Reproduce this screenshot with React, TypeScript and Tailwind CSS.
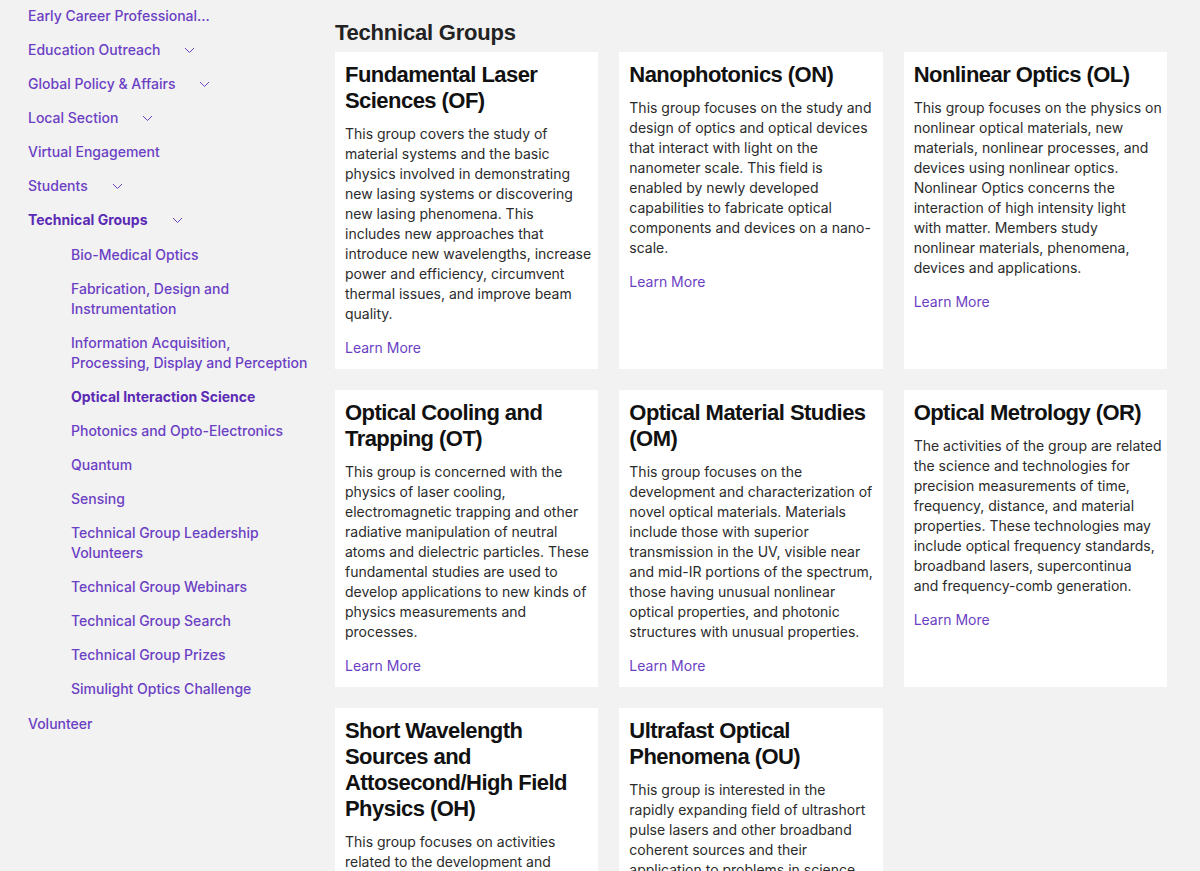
import React from "react";

type NavItem = { label: string[]; chevron?: boolean; active?: boolean };

const topItems: NavItem[] = [
  { label: ["Early Career Professional…"] },
  { label: ["Education Outreach"], chevron: true },
  { label: ["Global Policy & Affairs"], chevron: true },
  { label: ["Local Section"], chevron: true },
  { label: ["Virtual Engagement"] },
  { label: ["Students"], chevron: true },
];

const subItems: NavItem[] = [
  { label: ["Bio-Medical Optics"] },
  { label: ["Fabrication, Design and", "Instrumentation"] },
  { label: ["Information Acquisition,", "Processing, Display and Perception"] },
  { label: ["Optical Interaction Science"], active: true },
  { label: ["Photonics and Opto-Electronics"] },
  { label: ["Quantum"] },
  { label: ["Sensing"] },
  { label: ["Technical Group Leadership", "Volunteers"] },
  { label: ["Technical Group Webinars"] },
  { label: ["Technical Group Search"] },
  { label: ["Technical Group Prizes"] },
  { label: ["Simulight Optics Challenge"] },
];

// lines kept as in the original layout so the wrapping matches
const groups = [
  {
    title: ["Fundamental Laser", "Sciences (OF)"],
    text: [
      "This group covers the study of",
      "material systems and the basic",
      "physics involved in demonstrating",
      "new lasing systems or discovering",
      "new lasing phenomena. This",
      "includes new approaches that",
      "introduce new wavelengths, increase",
      "power and efficiency, circumvent",
      "thermal issues, and improve beam",
      "quality.",
    ],
  },
  {
    title: ["Nanophotonics (ON)"],
    text: [
      "This group focuses on the study and",
      "design of optics and optical devices",
      "that interact with light on the",
      "nanometer scale. This field is",
      "enabled by newly developed",
      "capabilities to fabricate optical",
      "components and devices on a nano-",
      "scale.",
    ],
  },
  {
    title: ["Nonlinear Optics (OL)"],
    text: [
      "This group focuses on the physics on",
      "nonlinear optical materials, new",
      "materials, nonlinear processes, and",
      "devices using nonlinear optics.",
      "Nonlinear Optics concerns the",
      "interaction of high intensity light",
      "with matter. Members study",
      "nonlinear materials, phenomena,",
      "devices and applications.",
    ],
  },
  {
    title: ["Optical Cooling and", "Trapping (OT)"],
    text: [
      "This group is concerned with the",
      "physics of laser cooling,",
      "electromagnetic trapping and other",
      "radiative manipulation of neutral",
      "atoms and dielectric particles. These",
      "fundamental studies are used to",
      "develop applications to new kinds of",
      "physics measurements and",
      "processes.",
    ],
  },
  {
    title: ["Optical Material Studies", "(OM)"],
    text: [
      "This group focuses on the",
      "development and characterization of",
      "novel optical materials. Materials",
      "include those with superior",
      "transmission in the UV, visible near",
      "and mid-IR portions of the spectrum,",
      "those having unusual nonlinear",
      "optical properties, and photonic",
      "structures with unusual properties.",
    ],
  },
  {
    title: ["Optical Metrology (OR)"],
    text: [
      "The activities of the group are related",
      "the science and technologies for",
      "precision measurements of time,",
      "frequency, distance, and material",
      "properties. These technologies may",
      "include optical frequency standards,",
      "broadband lasers, supercontinua",
      "and frequency-comb generation.",
    ],
  },
  {
    title: ["Short Wavelength", "Sources and", "Attosecond/High Field", "Physics (OH)"],
    text: [
      "This group focuses on activities",
      "related to the development and",
      "application of short wavelength",
      "sources and attosecond science.",
    ],
  },
  {
    title: ["Ultrafast Optical", "Phenomena (OU)"],
    text: [
      "This group is interested in the",
      "rapidly expanding field of ultrashort",
      "pulse lasers and other broadband",
      "coherent sources and their",
      "application to problems in science",
      "and engineering.",
    ],
  },
];

function Chevron() {
  return (
    <svg width="11" height="7" viewBox="0 0 11 7" className="ml-6 shrink-0 text-[#6b3fc4]">
      <polyline points="1,1 5.5,5.5 10,1" fill="none" stroke="currentColor" strokeWidth="1" />
    </svg>
  );
}

function Lines({ lines }: { lines: string[] }) {
  return (
    <>
      {lines.map((line) => (
        <span key={line} className="block">
          {line}
        </span>
      ))}
    </>
  );
}

export default function App() {
  return (
    <div
      className="h-[871px] overflow-hidden bg-[#f2f2f2] flex"
      style={{ fontFamily: "Inter, 'Noto Sans', sans-serif" }}
    >
      {/* Sidebar */}
      <nav className="w-[335px] shrink-0 pl-7 pt-[6px] flex flex-col gap-[14px] text-[14px] leading-5 font-medium text-[#6b3fc4] whitespace-nowrap">
        {topItems.map((item) => (
          <div key={item.label[0]} className="flex items-center">
            <span>{item.label[0]}</span>
            {item.chevron && <Chevron />}
          </div>
        ))}
        <div className="flex items-center font-bold text-[#5b2bb5]">
          <span>Technical Groups</span>
          <Chevron />
        </div>
        <div className="pl-[43px] mt-px flex flex-col gap-[14px]">
          {subItems.map((item) => (
            <div key={item.label[0]} className={item.active ? "font-bold text-[#5b2bb5]" : ""}>
              <Lines lines={item.label} />
            </div>
          ))}
        </div>
        <div className="mt-px">Volunteer</div>
      </nav>

      {/* Main */}
      <main className="flex-1 pr-[33px] pt-[21px]">
        <h1
          className="text-[22px] leading-6 font-bold text-[#222] tracking-[-0.01em] mb-[7px]"
          style={{ fontFamily: "'Liberation Sans', Arial, sans-serif" }}
        >
          Technical Groups
        </h1>
        <div className="grid grid-cols-3 gap-x-[21px] gap-y-[21px]">
          {groups.map((g) => (
            <div key={g.title.join(" ")} className="bg-white px-[10px] pt-[10px] pb-[11px]">
              <h2
                className="text-[22px] leading-[26px] font-bold text-[#111] tracking-tight whitespace-nowrap"
                style={{ fontFamily: "'Liberation Sans', Arial, sans-serif" }}
              >
                <Lines lines={g.title} />
              </h2>
              <p className="mt-[10px] text-[14px] leading-5 text-[#2b2b2b] whitespace-nowrap">
                <Lines lines={g.text} />
              </p>
              <a className="block mt-[14px] text-[14px] leading-5 text-[#6b3fc4]">Learn More</a>
            </div>
          ))}
        </div>
      </main>
    </div>
  );
}
